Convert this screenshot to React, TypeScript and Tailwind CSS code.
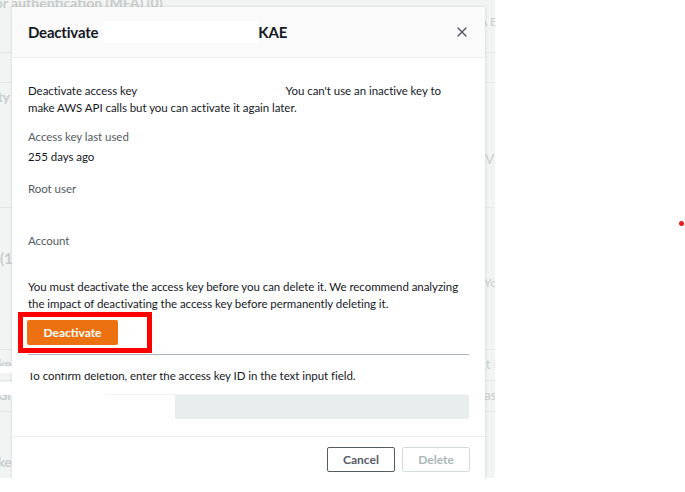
import { X } from 'lucide-react';

const font = { fontFamily: 'Lato, "Open Sans", sans-serif' };

function BgRow({ h, left, right, line = true }: { h: string; left?: string; right?: string; line?: boolean }) {
  return (
    <div className={`${h} flex items-center justify-between text-[13px] font-bold ${line ? 'border-t border-[#e4e7e7]' : ''}`}>
      <span className="-ml-[2px]">{left}</span>
      <span className="-mr-[6px] font-normal">{right}</span>
    </div>
  );
}

function BackgroundPage() {
  // faded console page behind the modal
  return (
    <div className="flex flex-col text-[#c9cdcd]">
      <div className="h-[14px] -ml-[68px] -mt-[6px] text-[14px] font-bold whitespace-nowrap leading-[18px]">
        Multi-factor authentication (MFA) (0)
      </div>
      <div className="h-[44px] flex items-start justify-between">
        <span />
        <span className="text-[12px] pt-[5px] -mr-[2px]">A E</span>
      </div>
      <BgRow h="h-[30px]" />
      <BgRow h="h-[30px]" left="ty" />
      <BgRow h="h-[95px]" right="VS" line={false} />
      <BgRow h="h-[32px]" />
      <div className="h-[110px] flex justify-between pt-[8px] text-[15px] font-bold">
        <span>(1</span>
        <span className="text-[12px] font-normal pt-[27px] -mr-[2px]">Yo</span>
      </div>
      <BgRow h="h-[31px]" left="ke" right="t u" />
      <BgRow h="h-[31px]" left="Gr" right="ast" />
      <BgRow h="h-[20px]" />
      <div className="h-[41px] flex items-end text-[13px] font-bold -ml-[2px]">ke</div>
    </div>
  );
}

function Modal() {
  return (
    <div className="absolute left-[12px] top-[7px] w-[473px] h-[480px] bg-white shadow-[0_0_3px_rgba(0,0,0,0.15)] flex flex-col">
      <div className="h-[51px] bg-[#fafafa] border-b border-[#eaeded] flex items-center justify-between pl-[16px] pr-[15px]">
        <h2 className="text-[15px] tracking-[-0.2px] font-bold text-[#16191f] flex items-center whitespace-nowrap">
          Deactivate
          <span className="inline-block w-[155px] h-[20px] bg-white ml-[5px]" />
          KAE
        </h2>
        <X className="w-[16px] h-[16px] text-[#545b64]" strokeWidth={2} />
      </div>

      <div className="px-[16px] pt-[24px] pb-[17px] text-[11.5px] tracking-[-0.05px] leading-[17px] text-[#16191f]">
        <p>
          Deactivate access key
          <span className="inline-block w-[146px]" /> You can't use an inactive key to
          <br />
          make AWS API calls but you can activate it again later.
        </p>
        <div className="mt-[12px] text-[#545b64]">Access key last used</div>
        <div className="mt-[3px]">255 days ago</div>
        <div className="mt-[15px] text-[#545b64]">Root user</div>
        <div className="mt-[35px] text-[#545b64]">Account</div>
        <p className="mt-[29px]">
          You must deactivate the access key before you can delete it. We recommend analyzing
          <br />
          the impact of deactivating the access key before permanently deleting it.
        </p>
        <div className="-ml-[10px] w-[134px] h-[41px] border-[5px] border-[#ff0000] pl-[4px] pt-[3px]">
          <button className="w-[91px] h-[25px] bg-[#ec7211] rounded-[2px] text-white font-bold text-[12px] tracking-normal">
            Deactivate
          </button>
        </div>
        <div className="h-px bg-[#aab7b8] mt-[1px]" />
        <p className="mt-[12px]">To confirm deletion, enter the access key ID in the text input field.</p>
        <div className="mt-[10px] h-[25px] flex rounded-[2px] overflow-hidden border-t border-[#f2f3f3]">
          <div className="w-[147px] bg-white" />
          <div className="flex-1 bg-[#eaeded]" />
        </div>
      </div>

      <div className="border-t border-[#eaeded] flex justify-end gap-[7px] pt-[10px] pr-[15px]">
        <button className="w-[68px] h-[25px] border border-[#545b64] rounded-[2px] text-[12px] font-bold text-[#545b64]">
          Cancel
        </button>
        <button className="w-[68px] h-[25px] border border-[#d5dbdb] rounded-[2px] text-[12px] font-bold text-[#aab7b8]">
          Delete
        </button>
      </div>
    </div>
  );
}

export default function App() {
  return (
    <div className="w-[685px] h-[492px] bg-white relative overflow-hidden" style={font}>
      <div className="relative w-[495px] h-[478px] bg-[#f2f3f3] overflow-hidden">
        <BackgroundPage />
        <Modal />
        {/* redaction patches left in the screenshot */}
        <div className="absolute left-0 top-[366px] w-[165px] h-[7px] bg-white" />
        <div className="absolute left-0 top-[382px] w-[105px] h-[13px] bg-white" />
      </div>
      <div className="absolute left-[679px] top-[221px] w-[5px] h-[5px] rounded-full bg-[#e41e1e]" />
    </div>
  );
}
